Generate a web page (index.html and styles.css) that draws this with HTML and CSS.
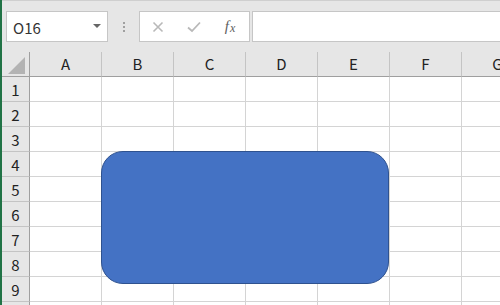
FILE: index.html
```html
<!DOCTYPE html>
<html>
<head>
<meta charset="utf-8">
<link rel="stylesheet" href="styles.css">
</head>
<body>
<div class="app">
  <div class="toolbar">
    <div class="namebox">
      <span class="name">O16</span>
      <span class="caret"></span>
    </div>
    <div class="grip"><i></i><i></i><i></i></div>
    <div class="fbuttons">
      <span class="fbtn">
        <svg width="12" height="12" viewBox="0 0 12 12"><path d="M1.5 1.5 L10.5 10.5 M10.5 1.5 L1.5 10.5" stroke="#b9b9b9" stroke-width="1.6" fill="none"/></svg>
      </span>
      <span class="fbtn">
        <svg width="14" height="12" viewBox="0 0 14 12"><path d="M1 6.5 L5 10 L13 1.5" stroke="#b9b9b9" stroke-width="1.8" fill="none"/></svg>
      </span>
      <span class="fbtn fx"><i>f</i><i class="x">x</i></span>
    </div>
    <div class="finput"></div>
  </div>
  <div class="sheet">
    <div class="corner"><svg width="18" height="17" viewBox="0 0 18 17"><polygon points="17,0 17,17 0,17" fill="#b3b3b3"/></svg></div>
    <div class="ch">A</div><div class="ch">B</div><div class="ch">C</div><div class="ch">D</div><div class="ch">E</div><div class="ch">F</div><div class="ch">G</div>

    <div class="rh">1</div><div class="c"></div><div class="c"></div><div class="c"></div><div class="c"></div><div class="c"></div><div class="c"></div><div class="c"></div>
    <div class="rh">2</div><div class="c"></div><div class="c"></div><div class="c"></div><div class="c"></div><div class="c"></div><div class="c"></div><div class="c"></div>
    <div class="rh">3</div><div class="c"></div><div class="c"></div><div class="c"></div><div class="c"></div><div class="c"></div><div class="c"></div><div class="c"></div>
    <div class="rh">4</div><div class="c"></div><div class="c"></div><div class="c"></div><div class="c"></div><div class="c"></div><div class="c"></div><div class="c"></div>
    <div class="rh">5</div><div class="c"></div><div class="c"></div><div class="c"></div><div class="c"></div><div class="c"></div><div class="c"></div><div class="c"></div>
    <div class="rh">6</div><div class="c"></div><div class="c"></div><div class="c"></div><div class="c"></div><div class="c"></div><div class="c"></div><div class="c"></div>
    <div class="rh">7</div><div class="c"></div><div class="c"></div><div class="c"></div><div class="c"></div><div class="c"></div><div class="c"></div><div class="c"></div>
    <div class="rh">8</div><div class="c"></div><div class="c"></div><div class="c"></div><div class="c"></div><div class="c"></div><div class="c"></div><div class="c"></div>
    <div class="rh">9</div><div class="c"></div><div class="c"></div><div class="c"></div><div class="c"></div><div class="c"></div><div class="c"></div><div class="c"></div>
    <div class="rh"></div><div class="c"></div><div class="c"></div><div class="c"></div><div class="c"></div><div class="c"></div><div class="c"></div><div class="c"></div>

    <div class="shape"></div>
  </div>
</div>
</body>
</html>
```

FILE: styles.css
```css
html, body {
  margin: 0;
  padding: 0;
  background: #ffffff;
  overflow: hidden;
}
.app {
  width: 498px;
  height: 305px;
  border-left: 2px solid #217346;
  overflow: hidden;
  font-family: "Noto Sans CJK JP", "Noto Sans", sans-serif;
  color: #222;
}
.toolbar {
  height: 52px;
  background: #e6e6e6;
  border-top: 1px solid #cfcfcf;
  display: flex;
  align-items: flex-start;
  padding-top: 10px;
  box-sizing: border-box;
}
.namebox {
  margin-left: 4px;
  width: 102px;
  height: 31px;
  box-sizing: border-box;
  background: #fff;
  border: 1px solid #c6c6c6;
  display: flex;
  align-items: center;
  justify-content: space-between;
  padding: 0 6px 0 6px;
}
.name {
  font-size: 15px;
  line-height: 1;
  color: #333;
  margin-top: 2px;
}
.caret {
  width: 0;
  height: 0;
  border-left: 4px solid transparent;
  border-right: 4px solid transparent;
  border-top: 4px solid #666;
  margin-top: -2px;
}
.grip {
  width: 31px;
  height: 31px;
  display: flex;
  flex-direction: column;
  align-items: center;
  justify-content: center;
  gap: 2px;
}
.grip i {
  display: block;
  width: 2px;
  height: 2px;
  background: #a0a0a0;
}
.fbuttons {
  width: 111px;
  height: 31px;
  box-sizing: border-box;
  background: #fff;
  border: 1px solid #c6c6c6;
  display: flex;
  align-items: center;
}
.fbtn {
  width: 36px;
  height: 29px;
  display: flex;
  align-items: center;
  justify-content: center;
}
.fx {
  font-family: "Liberation Serif", serif;
  font-style: italic;
  color: #5e5e5e;
  font-size: 15px;
}
.fx i { font-style: italic; }
.fx .x { font-size: 12px; margin-top: 3px; margin-left: 1px; }
.finput {
  margin-left: 2px;
  flex: 1;
  height: 31px;
  box-sizing: border-box;
  background: #fff;
  border: 1px solid #c6c6c6;
  border-right: none;
}
.sheet {
  position: relative;
  display: grid;
  grid-template-columns: 28px repeat(7, 72px);
  grid-template-rows: 25px repeat(10, 25px);
}
.corner {
  background: #e6e6e6;
  border-right: 1px solid #9f9f9f;
  border-bottom: 1px solid #9f9f9f;
  display: flex;
  align-items: flex-end;
  justify-content: flex-end;
  padding: 0 3px 2px 0;
}
.ch {
  background: #e6e6e6;
  border-right: 1px solid #c4c4c4;
  border-bottom: 1px solid #9f9f9f;
  font-size: 15px;
  line-height: 24px;
  text-align: center;
}
.rh {
  background: #e6e6e6;
  border-right: 1px solid #9f9f9f;
  border-bottom: 1px solid #c4c4c4;
  font-size: 15px;
  line-height: 25px;
  text-align: center;
}
.c {
  border-right: 1px solid #d4d4d4;
  border-bottom: 1px solid #d4d4d4;
}
.shape {
  position: absolute;
  left: 99px;
  top: 99px;
  width: 288px;
  height: 133px;
  box-sizing: border-box;
  background: #4472c4;
  border: 1px solid #2f528f;
  border-radius: 22px;
}
```
